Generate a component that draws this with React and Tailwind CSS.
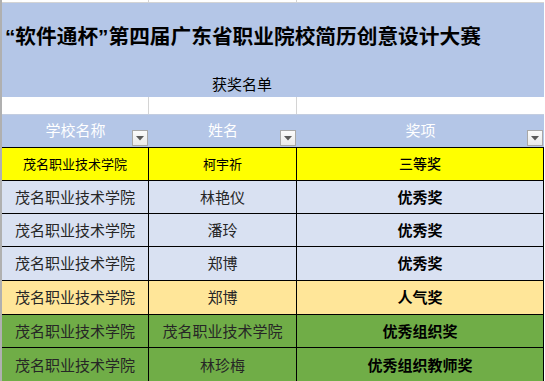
const rows = [
  { bg: 'bg-[#ffff00]', h: 'h-[33px]', school: '茂名职业技术学院', name: '柯宇祈', award: '三等奖', small: true },
  { bg: 'bg-[#d9e1f2]', h: 'h-[33px]', school: '茂名职业技术学院', name: '林艳仪', award: '优秀奖' },
  { bg: 'bg-[#d9e1f2]', h: 'h-[33px]', school: '茂名职业技术学院', name: '潘玲', award: '优秀奖' },
  { bg: 'bg-[#d9e1f2]', h: 'h-[34px]', school: '茂名职业技术学院', name: '郑博', award: '优秀奖' },
  { bg: 'bg-[#ffe699]', h: 'h-[34px]', school: '茂名职业技术学院', name: '郑博', award: '人气奖' },
  { bg: 'bg-[#70ad47]', h: 'h-[33px]', school: '茂名职业技术学院', name: '茂名职业技术学院', award: '优秀组织奖' },
  { bg: 'bg-[#70ad47]', h: 'h-[34px]', school: '茂名职业技术学院', name: '林珍梅', award: '优秀组织教师奖', last: true },
]

function FilterButton() {
  return (
    <div className="absolute right-[1px] bottom-[1px] w-4 h-4 border border-[#a8a8a8] bg-gradient-to-b from-[#fbfbfb] to-[#e9e9e9] flex items-center justify-center">
      <svg width="8" height="5" viewBox="0 0 8 5">
        <polygon points="0,0 8,0 4,4.5" fill="#5a5a5a" />
      </svg>
    </div>
  )
}

function GridRow({ h, line = 'border-[#d4d4d4]' }) {
  return (
    <div className={`flex ${h} bg-white border-b ${line}`}>
      <div className="w-[147px] border-r border-[#d4d4d4]" />
      <div className="w-[148px] border-r border-[#d4d4d4]" />
      <div className="w-[247px]" />
    </div>
  )
}

export default function App() {
  return (
    <div
      className="w-[545px] h-[381px] overflow-hidden bg-white"
      style={{ fontFamily: '"Liberation Sans", "Noto Sans CJK SC", sans-serif' }}
    >
      <div className="w-[544px] border-l-2 border-[#b0b0b0]">
        <GridRow h="h-[3px]" />

        {/* merged title block */}
        <div className="h-[94px] bg-[#b4c6e7] flex flex-col">
          <div className="h-[68px] flex items-center pl-[3px] text-[20.7px] font-bold text-black leading-none whitespace-nowrap">
            “软件通杯”第四届广东省职业院校简历创意设计大赛
          </div>
          <div className="h-[26px] flex items-center pl-[210px] text-[15px] text-black leading-none">
            获奖名单
          </div>
        </div>

        <GridRow h="h-[18px]" line="border-[#c3cde0]" />

        {/* header */}
        <div className="flex h-[33px] bg-[#b4c6e7] border-b border-black text-white text-[15px] leading-none">
          <div className="relative w-[147px] flex items-center justify-center pb-[1px]">
            学校名称
            <FilterButton />
          </div>
          <div className="relative w-[148px] flex items-center justify-center pb-[1px]">
            姓名
            <FilterButton />
          </div>
          <div className="relative w-[247px] flex items-center justify-center pb-[1px]">
            奖项
            <FilterButton />
          </div>
        </div>

        {rows.map((r, i) => (
          <div
            key={i}
            className={`flex ${r.h} ${r.bg} ${r.last ? '' : 'border-b border-black'} leading-none`}
          >
            <div
              className={`w-[147px] border-r border-black flex items-center justify-center ${
                r.small ? 'text-[13px] text-black' : 'text-[15px] text-[#262626]'
              }`}
            >
              {r.school}
            </div>
            <div
              className={`w-[148px] border-r border-black flex items-center justify-center ${
                r.small ? 'text-[13px] text-black' : 'text-[15px] text-[#262626]'
              }`}
            >
              {r.name}
            </div>
            <div
              className={`w-[247px] border-r border-black flex items-center justify-center text-black ${
                r.small ? 'text-[14px] font-medium' : 'text-[15px] font-bold'
              }`}
            >
              {r.award}
            </div>
          </div>
        ))}
      </div>
    </div>
  )
}
